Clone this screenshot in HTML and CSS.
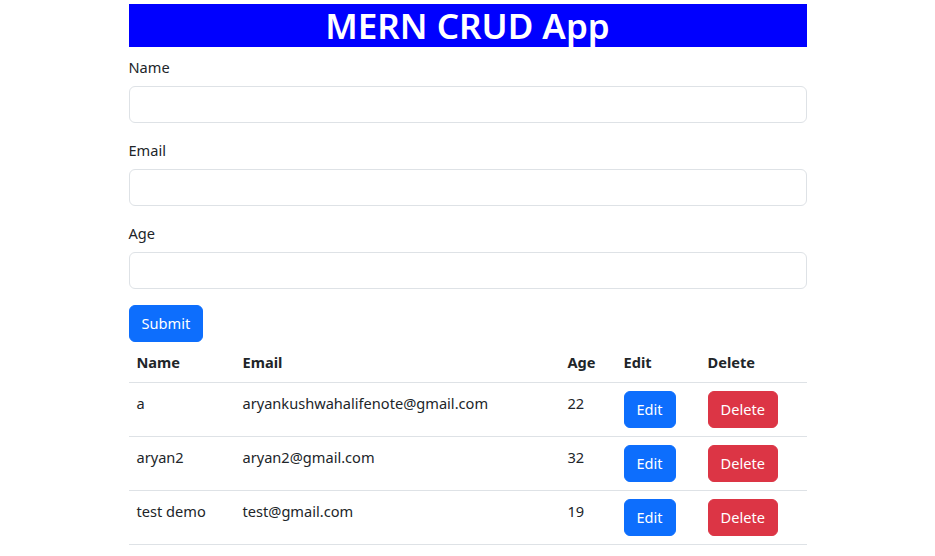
FILE: index.html
```html
<!DOCTYPE html>
<html lang="en">
<head>
<meta charset="utf-8">
<title>MERN CRUD App</title>
<link rel="stylesheet" href="styles.css">
</head>
<body>
<div class="container">
  <h1 class="title">MERN CRUD App</h1>
  <form class="form">
    <div class="group">
      <label class="label" for="name">Name</label>
      <input class="control" id="name" type="text">
    </div>
    <div class="group">
      <label class="label" for="email">Email</label>
      <input class="control" id="email" type="email">
    </div>
    <div class="group">
      <label class="label" for="age">Age</label>
      <input class="control" id="age" type="number">
    </div>
    <button type="button" class="btn btn-primary">Submit</button>
  </form>
  <table class="table">
    <thead>
      <tr>
        <th class="c-name">Name</th>
        <th class="c-email">Email</th>
        <th class="c-age">Age</th>
        <th class="c-edit">Edit</th>
        <th class="c-del">Delete</th>
      </tr>
    </thead>
    <tbody>
      <tr>
        <td>a</td>
        <td>aryankushwahalifenote@gmail.com</td>
        <td>22</td>
        <td><button class="btn btn-primary">Edit</button></td>
        <td><button class="btn btn-danger">Delete</button></td>
      </tr>
      <tr>
        <td>aryan2</td>
        <td>aryan2@gmail.com</td>
        <td>32</td>
        <td><button class="btn btn-primary">Edit</button></td>
        <td><button class="btn btn-danger">Delete</button></td>
      </tr>
      <tr>
        <td>test demo</td>
        <td>test@gmail.com</td>
        <td>19</td>
        <td><button class="btn btn-primary">Edit</button></td>
        <td><button class="btn btn-danger">Delete</button></td>
      </tr>
    </tbody>
  </table>
</div>
</body>
</html>
```
FILE: styles.css
```css
* { box-sizing: border-box; }
html, body { margin: 0; padding: 0; background: #fff; }
body {
  font-family: "Noto Sans", "Open Sans", sans-serif;
  font-size: 14.6px;
  line-height: 24px;
  color: #212529;
}
.container {
  width: 678px;
  margin: 0 auto;
  padding-top: 4px;
}
.title {
  margin: 0 0 9px;
  background: #0000ff;
  color: #fff;
  text-align: center;
  font-size: 35px;
  font-weight: 600;
  line-height: 43px;
  height: 43px;
}
.form { margin: 0; }
.group { margin-bottom: 16px; }
.label {
  display: block;
  line-height: 22px;
  margin-bottom: 8px;
}
.control {
  display: block;
  width: 100%;
  height: 37px;
  padding: 6px 12px;
  font: inherit;
  color: #212529;
  background: #fff;
  border: 1px solid #dee2e6;
  border-radius: 6px;
  outline: none;
}
.btn {
  display: block;
  height: 37px;
  font: inherit;
  line-height: 23px;
  padding: 6px 12px;
  border: 1px solid transparent;
  border-radius: 6px;
  color: #fff;
  cursor: pointer;
}
.btn-primary { background: #0d6efd; border-color: #0d6efd; }
.btn-danger { background: #dc3545; border-color: #dc3545; }
.table {
  width: 100%;
  border-collapse: collapse;
  margin-bottom: 16px;
}
.table th, .table td {
  padding: 8px;
  text-align: left;
  vertical-align: top;
  border-bottom: 1px solid #dee2e6;
}
.table th { font-weight: 700; }
.c-name { width: 106px; }
.c-email { width: 325px; }
.c-age { width: 56px; }
.c-edit { width: 84px; }
.c-del { width: 107px; }
```
